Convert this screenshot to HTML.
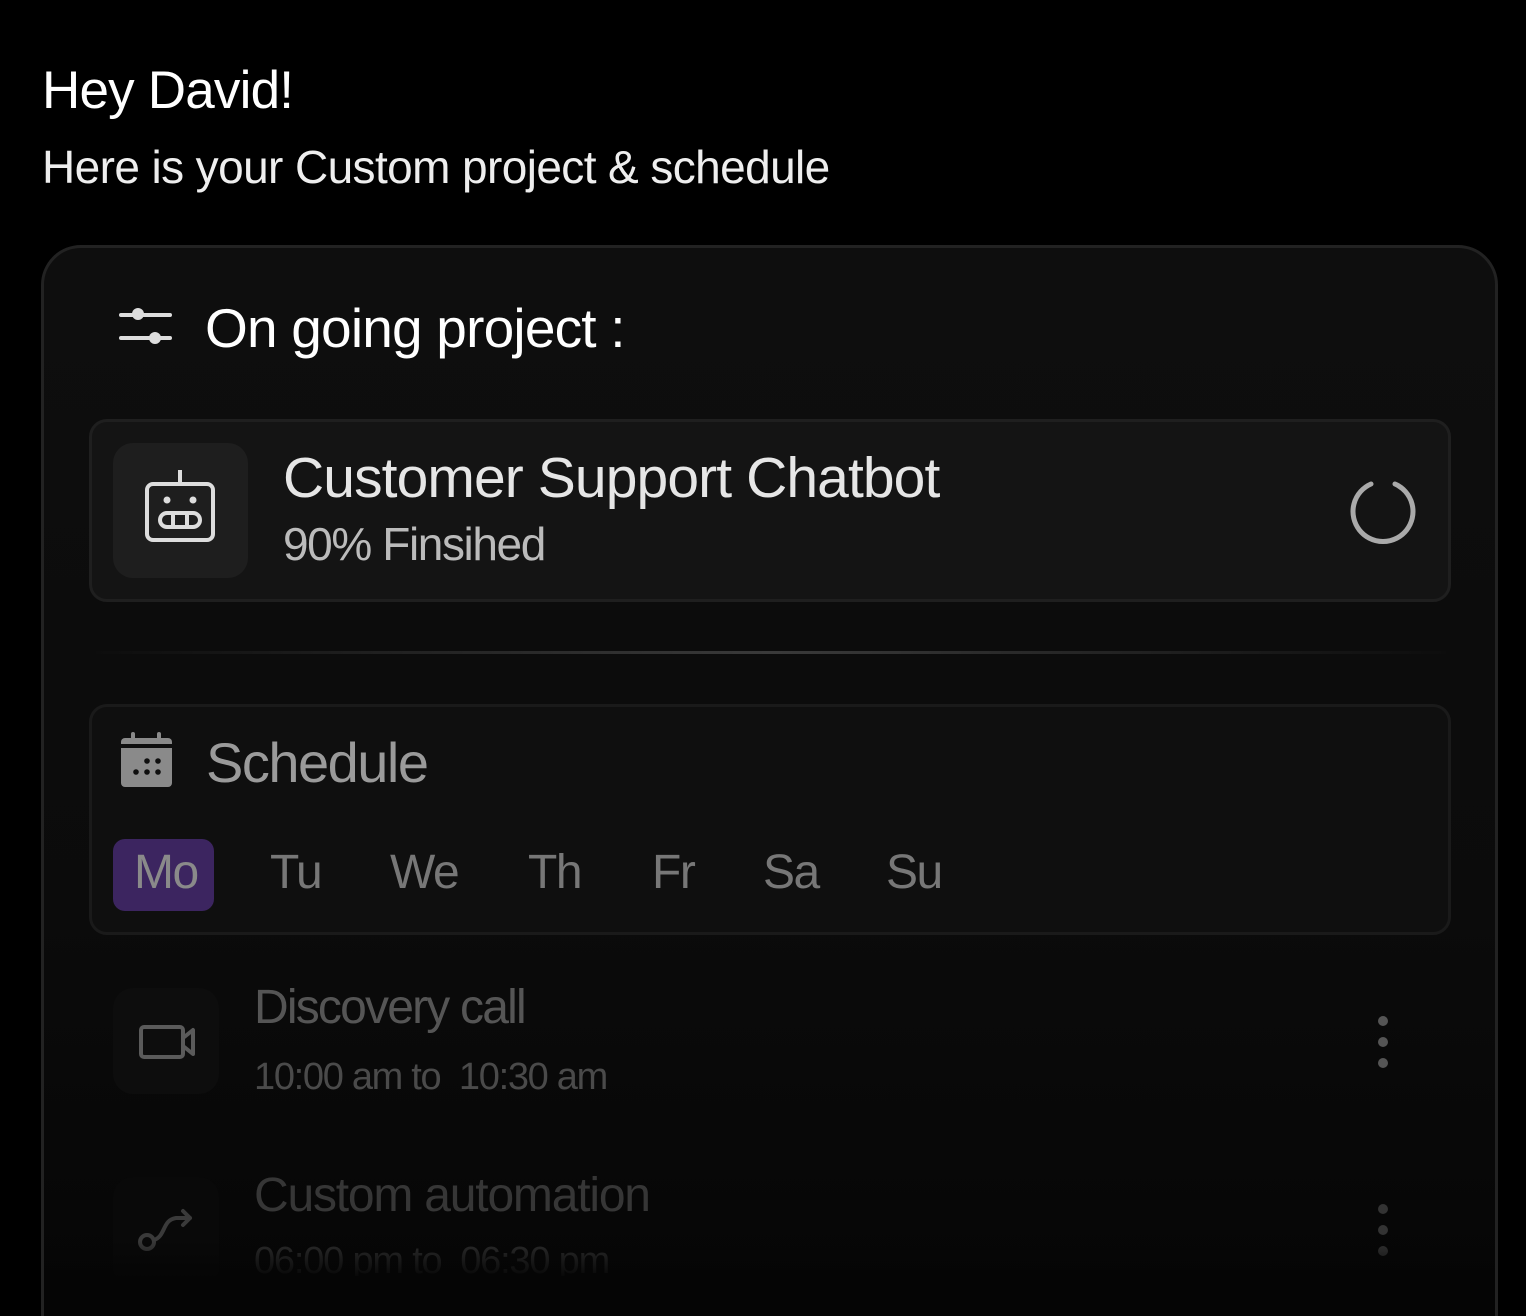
<!DOCTYPE html>
<html style="width:1526px;height:1316px;overflow:hidden"><head><style>
*{margin:0;padding:0;box-sizing:border-box}
body{width:1526px;height:1316px;background:#000;font-family:"Liberation Sans",sans-serif;position:relative;overflow:hidden;color:#fff}
#w{position:relative;width:1526px;height:1316px;overflow:hidden}
.a{position:absolute;white-space:nowrap}
</style></head><body><div id="w">
<div class="a" style="left:42px;top:60px;font-size:53px;letter-spacing:-0.8px">Hey David!</div>
<div class="a" style="left:42px;top:140px;font-size:46px;letter-spacing:-0.6px;color:#eee">Here is your Custom project &amp; schedule</div>

<div class="a" style="left:41px;top:245px;width:1457px;height:1120px;border:3px solid #222;border-radius:40px;background:linear-gradient(#0e0e0e,#0b0b0b 60%,#050505)"></div>

<svg class="a" style="left:118px;top:304px" width="56" height="42" viewBox="0 0 56 42"><g stroke="#ddd" stroke-width="4" stroke-linecap="round"><line x1="3" y1="11" x2="52" y2="11"/><line x1="3" y1="34" x2="52" y2="34"/></g><circle cx="20" cy="10" r="6" fill="#ddd"/><circle cx="37" cy="34" r="6" fill="#ddd"/></svg>
<div class="a" style="left:205px;top:296px;font-size:55px;letter-spacing:-0.8px">On going project :</div>

<div class="a" style="left:89px;top:419px;width:1362px;height:183px;border:3px solid #1f1f1f;border-radius:18px;background:#141414"></div>
<div class="a" style="left:113px;top:443px;width:135px;height:135px;border-radius:20px;background:#1e1e1e"></div>
<svg class="a" style="left:140px;top:468px" width="80" height="80" viewBox="0 0 80 80"><g fill="none" stroke="#ddd" stroke-width="4"><line x1="40" y1="2" x2="40" y2="16"/><rect x="7" y="16" width="66" height="56" rx="6"/><rect x="20" y="45" width="40" height="14" rx="7"/><line x1="33" y1="45" x2="33" y2="59"/><line x1="47" y1="45" x2="47" y2="59"/></g><circle cx="27" cy="32" r="3.5" fill="#ddd"/><circle cx="53" cy="32" r="3.5" fill="#ddd"/></svg>
<div class="a" style="left:283px;top:445px;font-size:57px;letter-spacing:-0.9px;color:#e6e6e6">Customer Support Chatbot</div>
<div class="a" style="left:283px;top:517px;font-size:46px;letter-spacing:-1.4px;color:#bbb">90% Finsihed</div>
<svg class="a" style="left:1346px;top:474px" width="74" height="70" viewBox="0 0 74 70"><path d="M25 10 A30 30 0 1 0 49 10" fill="none" stroke="#aaa" stroke-width="5" stroke-linecap="round"/></svg>

<div class="a" style="left:96px;top:651px;width:1350px;height:3px;background:linear-gradient(90deg,#0d0d0d,#3a3a3a 50%,#0d0d0d)"></div>

<div class="a" style="left:89px;top:704px;width:1362px;height:231px;border:3px solid #1a1a1a;border-radius:18px;background:#0f0f0f"></div>
<svg class="a" style="left:120px;top:732px" width="54" height="56" viewBox="0 0 54 56"><rect x="1" y="6" width="51" height="49" rx="4" fill="#8a8a8a"/><rect x="1" y="12" width="51" height="4" fill="#0f0f0f"/><rect x="11" y="0" width="4" height="12" rx="2" fill="#8a8a8a"/><rect x="37" y="0" width="4" height="12" rx="2" fill="#8a8a8a"/><g fill="#0f0f0f"><circle cx="27" cy="29" r="2.8"/><circle cx="38" cy="29" r="2.8"/><circle cx="16" cy="40" r="2.8"/><circle cx="27" cy="40" r="2.8"/><circle cx="38" cy="40" r="2.8"/></g></svg>
<div class="a" style="left:206px;top:730px;font-size:56px;letter-spacing:-1.5px;color:#9a9a9a">Schedule</div>
<div class="a" style="left:113px;top:839px;width:101px;height:72px;border-radius:12px;background:#3c2560"></div>
<div class="a" style="top:845px;left:0;font-size:48px;color:#777;letter-spacing:-1.5px">
<span class="a" style="left:134px;color:#8a8a8a">Mo</span><span class="a" style="left:270px">Tu</span><span class="a" style="left:390px">We</span><span class="a" style="left:528px">Th</span><span class="a" style="left:652px">Fr</span><span class="a" style="left:763px">Sa</span><span class="a" style="left:886px">Su</span></div>

<div class="a" style="left:113px;top:988px;width:106px;height:106px;border-radius:20px;background:#0d0d0d"></div>
<svg class="a" style="left:138px;top:1022px" width="60" height="40" viewBox="0 0 60 40"><rect x="3" y="5" width="42" height="30" rx="3" fill="none" stroke="#5a5a5a" stroke-width="4"/><path d="M45 16 L55 8 V32 L45 24" fill="none" stroke="#5a5a5a" stroke-width="4" stroke-linejoin="round"/></svg>
<div class="a" style="left:254px;top:980px;font-size:48px;letter-spacing:-1.8px;color:#555">Discovery call</div>
<div class="a" style="left:254px;top:1056px;font-size:38px;letter-spacing:-1.3px;color:#4a4a4a">10:00 am to&nbsp; 10:30 am</div>
<svg class="a" style="left:1374px;top:1014px" width="18" height="56"><g fill="#555"><circle cx="9" cy="7" r="5"/><circle cx="9" cy="28" r="5"/><circle cx="9" cy="49" r="5"/></g></svg>

<div class="a" style="left:113px;top:1177px;width:106px;height:110px;border-radius:20px;background:#090909"></div>
<svg class="a" style="left:136px;top:1208px" width="60" height="46" viewBox="0 0 60 46"><circle cx="11" cy="34" r="7" fill="none" stroke="#3a3a3a" stroke-width="4"/><path d="M18 32 C30 28 26 12 40 10 L54 10 M47 3 L54 10 L47 17" fill="none" stroke="#3a3a3a" stroke-width="4" stroke-linecap="round" stroke-linejoin="round"/></svg>
<div class="a" style="left:254px;top:1168px;font-size:48px;letter-spacing:-1.2px;color:#363636">Custom automation</div>
<div style="position:absolute;left:254px;top:1240px;height:36px;overflow:hidden;width:500px"><div style="font-size:38px;letter-spacing:-1.2px;color:#2c2c2c;white-space:nowrap">06:00 pm to&nbsp; 06:30 pm</div></div>
<svg class="a" style="left:1374px;top:1202px" width="18" height="56"><g fill="#333"><circle cx="9" cy="7" r="5"/><circle cx="9" cy="28" r="5"/><circle cx="9" cy="49" r="5"/></g></svg>

<div class="a" style="left:44px;top:1276px;width:1451px;height:40px;background:#050505"></div>
<div class="a" style="left:44px;top:1240px;width:1451px;height:40px;background:linear-gradient(rgba(5,5,5,0),#050505)"></div>
</div></body></html>
